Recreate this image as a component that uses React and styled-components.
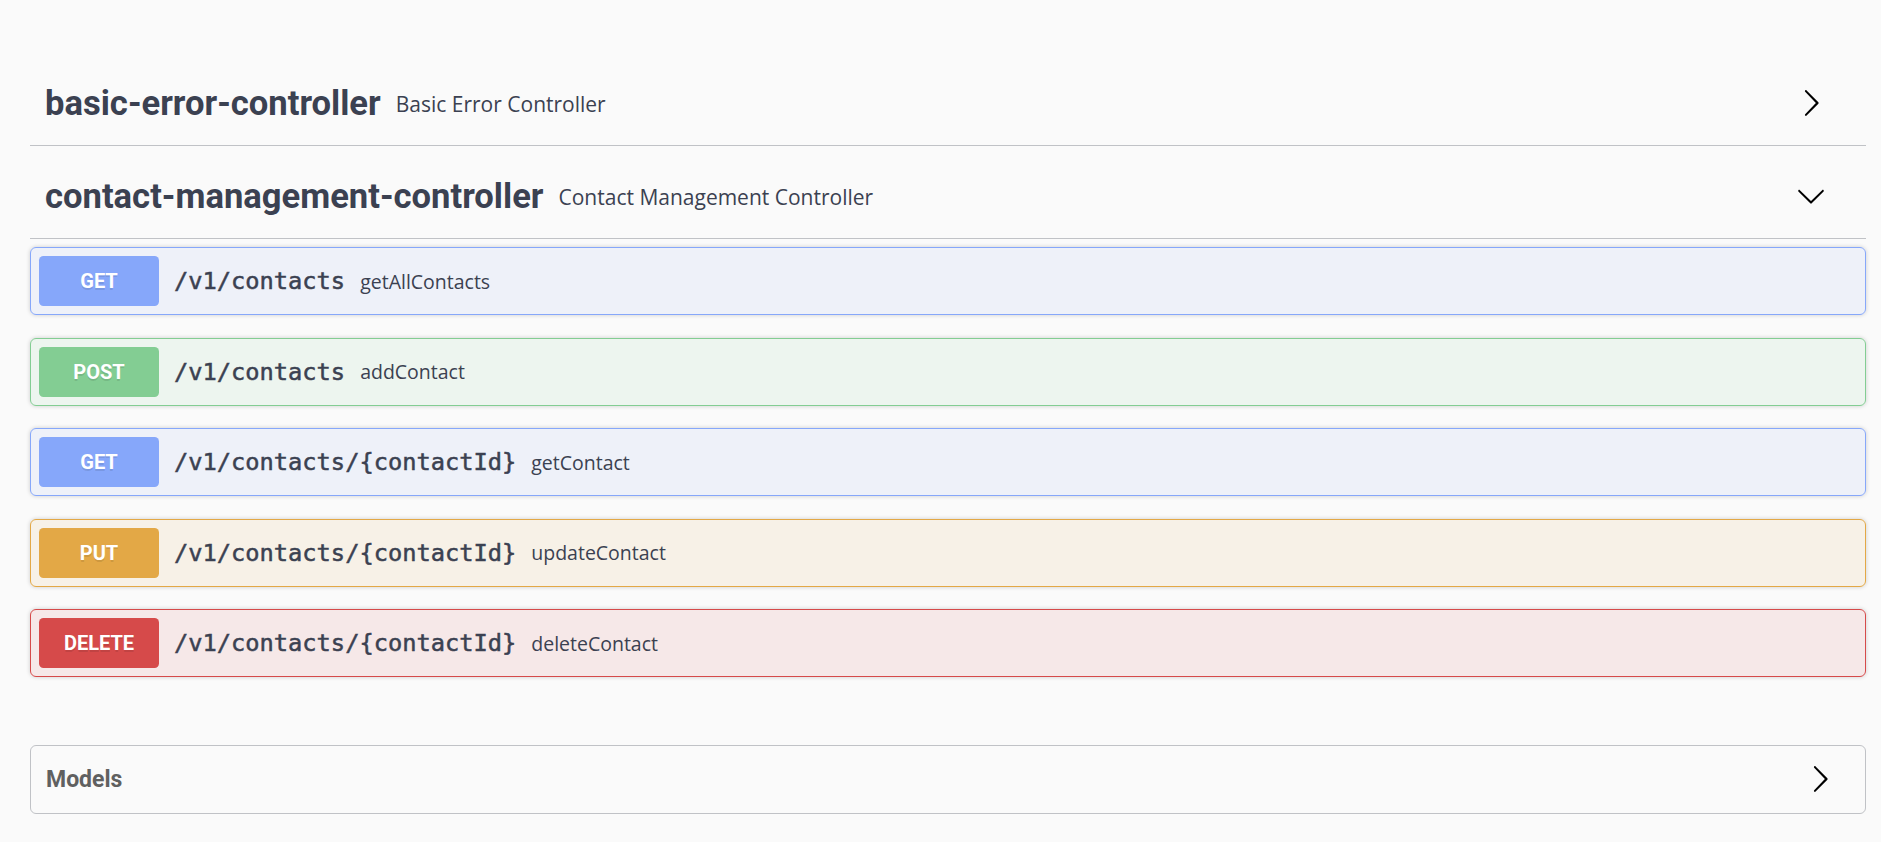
import React from 'react';
import styled, { createGlobalStyle } from 'styled-components';

const GlobalStyle = createGlobalStyle`
  body {
    margin: 0;
    background: #fafafa;
    color: #3b4151;
    font-family: "Open Sans", sans-serif;
  }
`;

const METHOD_COLORS = {
  GET: '#86a7fa',
  POST: '#83cd93',
  PUT: '#e3a846',
  DELETE: '#d64a4a',
};

const Page = styled.div`
  padding: 61px 15px 20px 30px;
`;

const TagSection = styled.section`
  display: flex;
  flex-direction: column;
`;

const TagHeader = styled.h3`
  box-sizing: border-box;
  display: flex;
  align-items: center;
  height: 85px;
  margin: 0 0 8px;
  padding: 0 40px 0 15px;
  border-bottom: 1px solid rgba(59, 65, 81, 0.3);
  cursor: pointer;
`;

const TagName = styled.span`
  font-family: Roboto, "Liberation Sans", sans-serif;
  font-size: 34.6px;
  font-weight: 700;
  color: #3b4151;
`;

const TagDesc = styled.small`
  flex: 1;
  padding: 0 15px;
  font-family: "Open Sans", sans-serif;
  font-size: 21px;
  font-weight: 400;
  color: #3b4151;
  margin-top: 1px;
`;

const ArrowButton = styled.span`
  display: flex;
  align-items: center;
  justify-content: center;
  width: 30px;
  height: 30px;
`;

const OpList = styled.div`
  display: flex;
  flex-direction: column;
`;

const Opblock = styled.div`
  box-sizing: border-box;
  display: flex;
  align-items: center;
  height: 68px;
  margin: 0 0 22.5px;
  padding: 0 8px;
  border: 1px solid ${p => p.$color};
  border-radius: 6px;
  background: ${p => p.$color}1a;
  box-shadow: 0 0 4.5px rgba(0, 0, 0, 0.19);
`;

const Method = styled.span`
  min-width: 120px;
  height: 50px;
  display: flex;
  align-items: center;
  justify-content: center;
  border-radius: 4.5px;
  background: ${p => p.$color};
  color: #fff;
  font-family: Roboto, "Liberation Sans", sans-serif;
  font-size: 20px;
  font-weight: 700;
  text-shadow: 0 1.5px 0 rgba(0, 0, 0, 0.1);
`;

const Path = styled.span`
  padding: 0 15px;
  font-family: "DejaVu Sans Mono", monospace;
  font-size: 23.7px;
  font-weight: 400;
  -webkit-text-stroke: 0.5px #3b4151;
  color: #3b4151;
`;

const OpDesc = styled.span`
  font-family: "Open Sans", sans-serif;
  font-size: 19.5px;
  color: #3b4151;
`;

const Models = styled.section`
  margin: 45px 0 0;
  border: 1px solid rgba(59, 65, 81, 0.3);
  border-radius: 6px;
`;

const ModelsHeader = styled.h4`
  display: flex;
  align-items: center;
  justify-content: space-between;
  margin: 0;
  padding: 16px 30px 16px 15px;
  line-height: 35px;
  font-family: Roboto, "Liberation Sans", sans-serif;
  font-size: 23px;
  font-weight: 700;
  color: #606060;
`;

const ArrowRight = () => (
  <svg width="30" height="30" viewBox="0 0 20 20" fill="#000">
    <path d="M13.25 10L6.109 2.58c-.268-.27-.268-.707 0-.979.268-.27.701-.27.969 0l7.83 7.908c.268.271.268.709 0 .979l-7.83 7.908c-.268.271-.701.27-.969 0-.268-.269-.268-.707 0-.979L13.25 10z" />
  </svg>
);

const ArrowDown = () => (
  <svg width="30" height="30" viewBox="0 0 20 20" fill="#000">
    <path d="M17.418 6.109c.272-.268.709-.268.979 0s.271.701 0 .969l-7.908 7.83c-.27.268-.707.268-.979 0l-7.908-7.830c-.27-.268-.27-.701 0-.969.271-.268.709-.268.979 0L10 13.25l7.418-7.141z" />
  </svg>
);

const operations = [
  { method: 'GET', path: '/v1/contacts', summary: 'getAllContacts' },
  { method: 'POST', path: '/v1/contacts', summary: 'addContact' },
  { method: 'GET', path: '/v1/contacts/{contactId}', summary: 'getContact' },
  { method: 'PUT', path: '/v1/contacts/{contactId}', summary: 'updateContact' },
  { method: 'DELETE', path: '/v1/contacts/{contactId}', summary: 'deleteContact' },
];

const Tag = ({ name, desc, open }) => (
  <TagHeader>
    <TagName>{name}</TagName>
    <TagDesc>{desc}</TagDesc>
    <ArrowButton>{open ? <ArrowDown /> : <ArrowRight />}</ArrowButton>
  </TagHeader>
);

export default function App() {
  return (
    <Page>
      <GlobalStyle />
      <TagSection>
        <Tag name="basic-error-controller" desc="Basic Error Controller" />
      </TagSection>
      <TagSection>
        <Tag name="contact-management-controller" desc="Contact Management Controller" open />
        <OpList>
          {operations.map((op, i) => (
            <Opblock key={i} $color={METHOD_COLORS[op.method]}>
              <Method $color={METHOD_COLORS[op.method]}>{op.method}</Method>
              <Path>{op.path}</Path>
              <OpDesc>{op.summary}</OpDesc>
            </Opblock>
          ))}
        </OpList>
      </TagSection>
      <Models>
        <ModelsHeader>
          <span>Models</span>
          <ArrowRight />
        </ModelsHeader>
      </Models>
    </Page>
  );
}
